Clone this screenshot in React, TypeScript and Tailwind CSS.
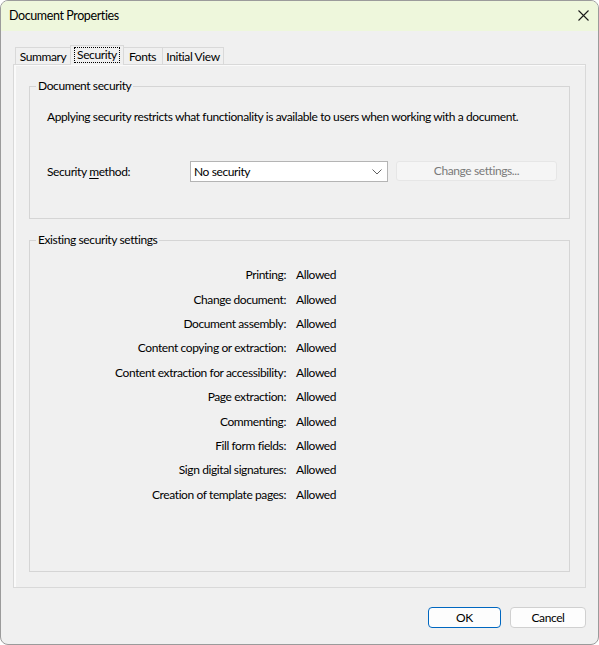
import React from "react";

const font = { fontFamily: 'Lato, "Segoe UI", "Noto Sans", sans-serif' };

const rows: [string, string][] = [
  ["Printing:", "Allowed"],
  ["Change document:", "Allowed"],
  ["Document assembly:", "Allowed"],
  ["Content copying or extraction:", "Allowed"],
  ["Content extraction for accessibility:", "Allowed"],
  ["Page extraction:", "Allowed"],
  ["Commenting:", "Allowed"],
  ["Fill form fields:", "Allowed"],
  ["Sign digital signatures:", "Allowed"],
  ["Creation of template pages:", "Allowed"],
];

export default function App() {
  return (
    <div className="w-[599px] h-[645px] bg-white text-[12px] tracking-[-0.4px] text-black leading-[16px]" style={font}>
      <div className="w-full h-full border border-[#9b9b9b] rounded-[8px] overflow-hidden bg-[#f0f0f0] flex flex-col">
        {/* title bar */}
        <div className="h-[30px] bg-[#eef7dc] flex items-center justify-between pl-[8px] pr-[9px] shrink-0">
          <span className="text-[12.5px]">Document Properties</span>
          <svg width="11" height="11" viewBox="0 0 11 11" className="mt-[-2px]">
            <path d="M0.5 0.5 L10.5 10.5 M10.5 0.5 L0.5 10.5" stroke="#1a1a1a" strokeWidth="1.1" />
          </svg>
        </div>

        <div className="flex flex-col px-[12px] pt-[14px]">
          {/* tabs */}
          <div className="flex items-end pl-[2px] h-[20px] relative z-10">
            <div className="w-[56px] h-[18px] border border-b-0 border-[#d9d9d9] flex items-center justify-center">Summary</div>
            <div className="w-[54px] h-[20px] border border-b-0 border-[#d9d9d9] bg-[#f0f0f0] flex items-center justify-center pb-[2px] -mx-[1px] relative">
              <span className="px-[2px] leading-[14px] outline outline-1 outline-dotted outline-black">Security</span>
            </div>
            <div className="w-[40px] h-[18px] border border-b-0 border-l-0 border-[#d9d9d9] flex items-center justify-center">Fonts</div>
            <div className="w-[61px] h-[18px] border border-b-0 border-l-0 border-[#d9d9d9] flex items-center justify-center">Initial View</div>
          </div>

          {/* panel */}
          <div className="h-[524px] -mt-px border border-[#d9d9d9] shadow-[inset_2px_1px_0_#fafafa] px-[15px] pt-[13px] flex flex-col gap-[13px]">
            <fieldset className="border border-[#d5d5d5] h-[141px] min-w-0">
              <legend className="ml-[6px] px-[2px]">Document security</legend>
              <div className="pl-[17px] pr-[10px]">
                <div className="mt-[15px]">
                  Applying security restricts what functionality is available to users when working with a document.
                </div>
                <div className="flex items-center mt-[36px]">
                  <span className="w-[143px] shrink-0">
                    Security <span className="underline underline-offset-2">m</span>ethod:
                  </span>
                  <div className="w-[198px] h-[21px] shrink-0 bg-white border border-[#b4b4b4] flex items-center justify-between pl-[3px] pr-[5px]">
                    <span>No security</span>
                    <svg width="10" height="6" viewBox="0 0 10 6">
                      <path d="M0.5 0.5 L5 5 L9.5 0.5" stroke="#606060" strokeWidth="1" fill="none" />
                    </svg>
                  </div>
                  <div className="ml-[8px] w-[161px] h-[20px] shrink-0 mt-[-1px] bg-[#f5f5f5] border border-[#e6e6e6] rounded-[3px] flex items-center justify-center text-[#7a7a7a]">
                    Change settings...
                  </div>
                </div>
              </div>
            </fieldset>

            <fieldset className="border border-[#d5d5d5] h-[340px] min-w-0">
              <legend className="ml-[6px] px-[2px]">Existing security settings</legend>
              <div className="mt-[15px] flex flex-col">
                {rows.map(([k, v]) => (
                  <div key={k} className="h-[24.4px] flex items-center">
                    <span className="w-[256px] text-right">{k}</span>
                    <span className="ml-[10px]">{v}</span>
                  </div>
                ))}
              </div>
            </fieldset>
          </div>

          {/* footer */}
          <div className="flex justify-end gap-[9px] mt-[19px]">
            <div className="w-[73px] h-[21px] bg-[#fdfdfd] border border-[#0067c0] rounded-[4px] flex items-center justify-center">OK</div>
            <div className="w-[76px] h-[21px] bg-[#fdfdfd] border border-[#d0d0d0] rounded-[4px] flex items-center justify-center">Cancel</div>
          </div>
        </div>
      </div>
    </div>
  );
}
